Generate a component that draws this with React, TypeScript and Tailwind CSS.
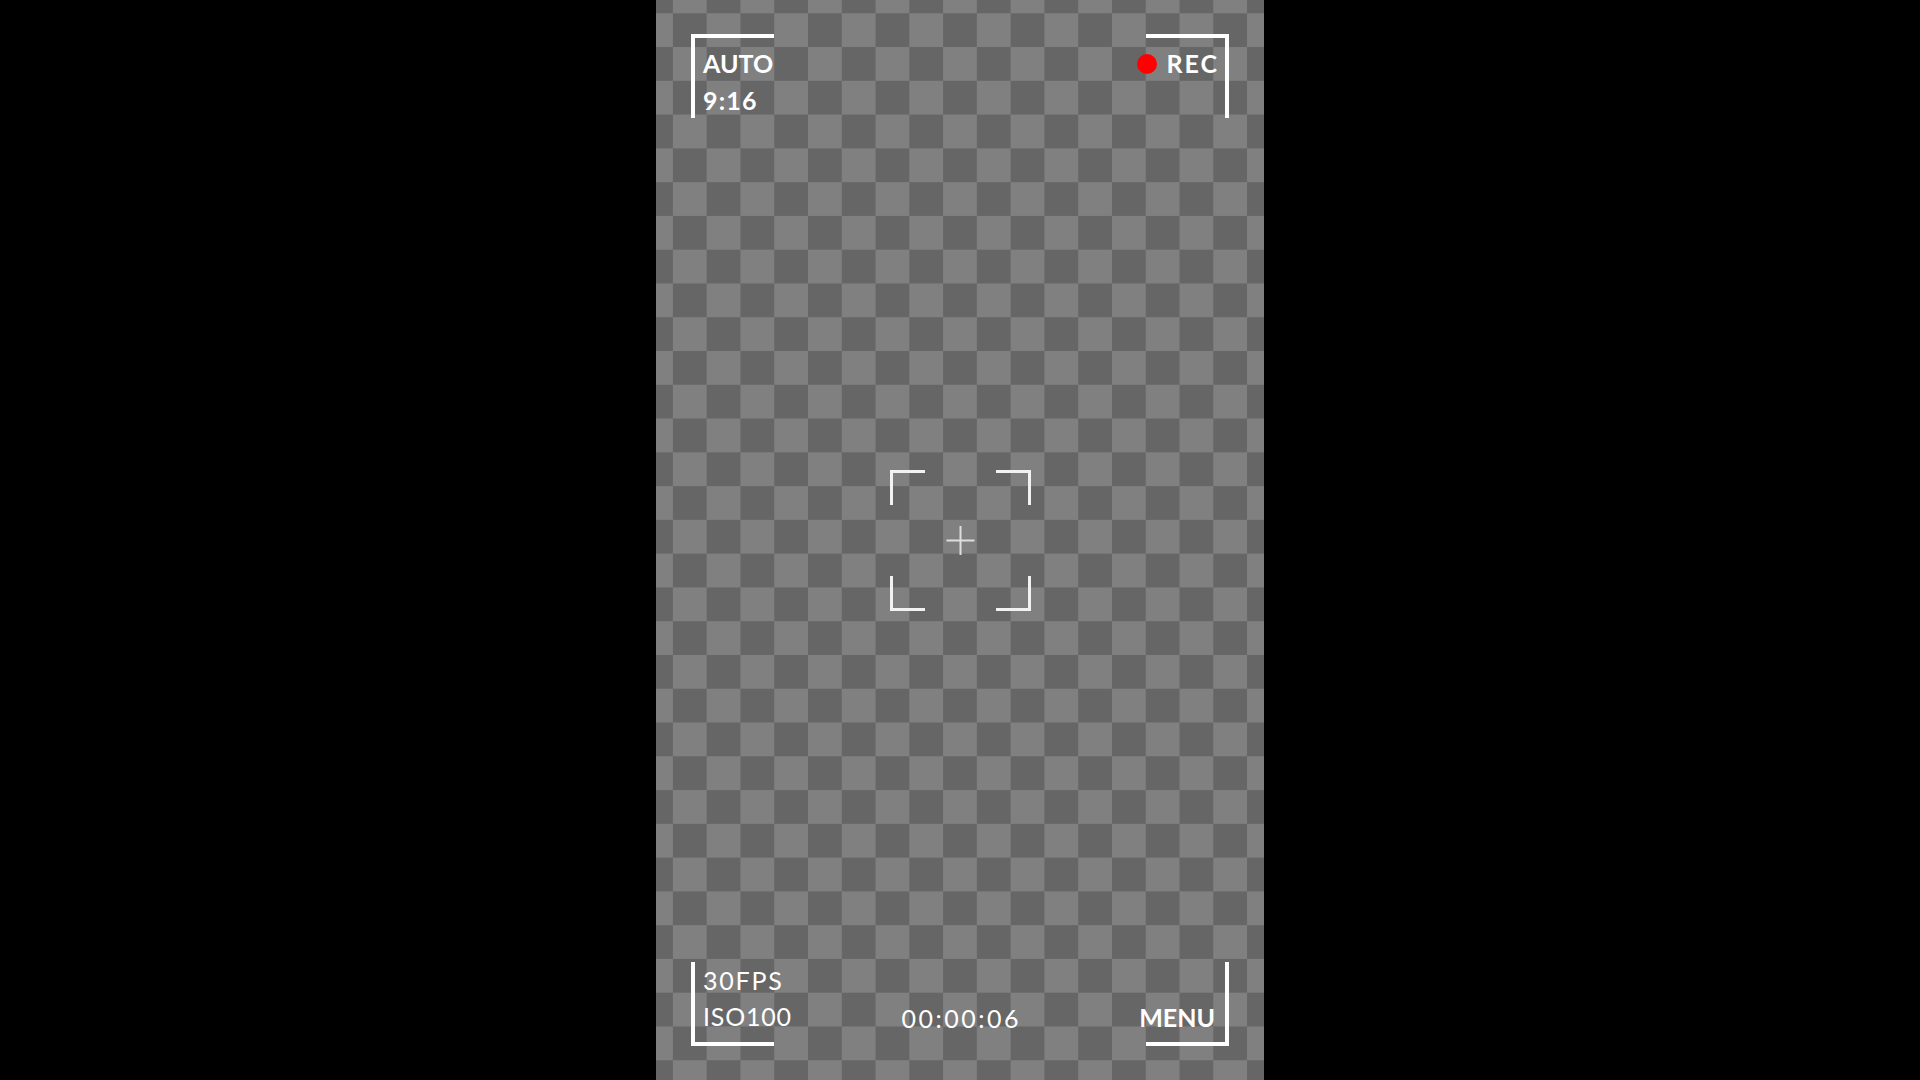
/**
 * Camera Viewfinder
 *
 * 9:16 recording overlay on a transparency checkerboard.
 */

function Reticle() {
  return (
    <svg width="141" height="141" viewBox="0 0 141 141" fill="none">
      <g stroke="#f2f2f2" strokeWidth="3">
        <path d="M1.5 35V1.5H35" />
        <path d="M106 1.5H139.5V35" />
        <path d="M1.5 106V139.5H35" />
        <path d="M106 139.5H139.5V106" />
      </g>
      <g stroke="#dedede" strokeWidth="2">
        <path d="M56.5 70.5H84.5" />
        <path d="M70.5 56V85" />
      </g>
    </svg>
  );
}

export default function App() {
  return (
    <div className="flex h-screen w-full justify-center bg-black font-['Lato',sans-serif] text-white">
      <div className="flex h-full w-[608px] flex-col bg-[conic-gradient(#808080_25%,#666666_0_50%,#808080_0_75%,#666666_0)] bg-[length:67.56px_67.56px] bg-[position:-16.89px_-20.5px] px-[35px] py-[34px]">
        {/* Top HUD */}
        <div className="flex items-start justify-between">
          <div className="h-[84px] w-[83px] whitespace-nowrap border-l-4 border-t-4 border-white pl-2 pt-[7px] text-[25px] font-bold leading-[37px]">
            <div>AUTO</div>
            <div className="tracking-[1.2px]">9:16</div>
          </div>
          <div className="flex h-[84px] w-[83px] items-start justify-end border-r-4 border-t-4 border-white pr-2 pt-[7px]">
            <div className="flex shrink-0 items-center gap-[9px] text-[25px] font-bold leading-[37px]">
              <span className="h-5 w-5 rounded-full bg-[#ff0000]" />
              <span className="mr-[-2px] tracking-[2px]">REC</span>
            </div>
          </div>
        </div>

        {/* Focus reticle */}
        <div className="flex flex-1 items-center justify-center">
          <Reticle />
        </div>

        {/* Bottom HUD */}
        <div className="flex items-end justify-between">
          <div className="flex h-[84px] w-[83px] flex-col justify-end whitespace-nowrap border-b-4 border-l-4 border-white pb-2 pl-2 text-[25px] leading-[36px]">
            <div className="tracking-[1.8px]">30FPS</div>
            <div className="tracking-[0.8px]">ISO100</div>
          </div>
          <div className="pb-[10px] pl-[2.5px] text-[25px] leading-[36px] tracking-[2.5px]">00:00:06</div>
          <div className="flex h-[84px] w-[83px] items-end justify-end whitespace-nowrap border-b-4 border-r-4 border-white pb-[7px] pr-[10px]">
            <span className="shrink-0 text-[25px] font-bold leading-[36px]">MENU</span>
          </div>
        </div>
      </div>
    </div>
  );
}
